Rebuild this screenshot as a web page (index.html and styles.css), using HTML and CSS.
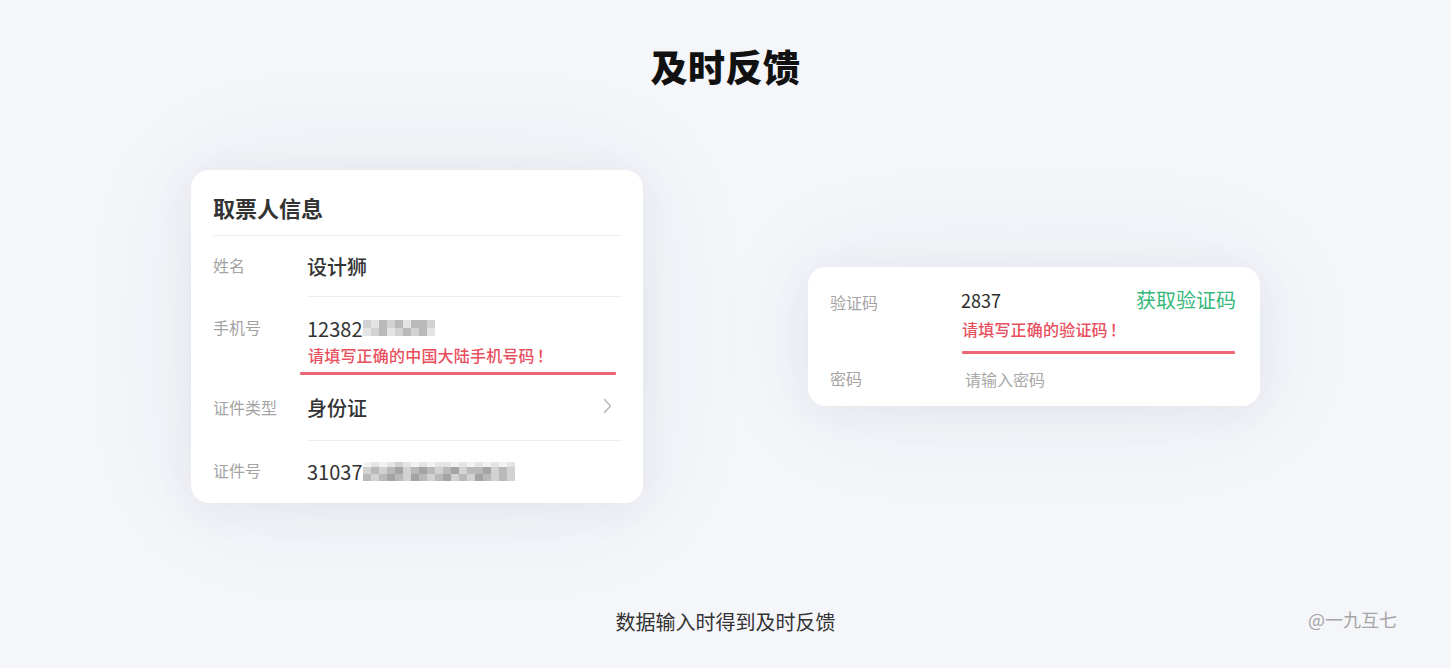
FILE: index.html
```html
<!DOCTYPE html>
<html lang="zh-CN">
<head>
<meta charset="utf-8">
<link rel="stylesheet" href="styles.css">
</head>
<body>
<div class="page">
  <h1 class="title">及时反馈</h1>
  <div class="cards">
    <div class="card card-left">
      <div class="card-title">取票人信息</div>
      <div class="row r1">
        <div class="label">姓名</div>
        <div class="content bordered"><span class="value">设计狮</span></div>
      </div>
      <div class="row r2">
        <div class="label">手机号</div>
        <div class="content">
          <div class="value num">12382<span class="blur b-short"><i class="c2"></i><i class="c1"></i><i class="c3"></i><i class="c2"></i><i class="c3"></i><i class="c1"></i><i class="c3"></i><i class="c3"></i><i class="c2"></i><i class="c1"></i><i class="c2"></i><i class="c3"></i><i class="c1"></i><i class="c2"></i><i class="c3"></i><i class="c2"></i><i class="c3"></i><i class="c1"></i></span></div>
          <div class="error">请填写正确的中国大陆手机号码<span class="bang">！</span></div>
          <div class="err-line wide"></div>
        </div>
      </div>
      <div class="row r3">
        <div class="label">证件类型</div>
        <div class="content bordered split">
          <span class="value">身份证</span>
          <svg class="chev" width="9" height="16" viewBox="0 0 9 16"><path d="M1.5 1.5 L7.5 8 L1.5 14.5" fill="none" stroke="#b5b5b5" stroke-width="1.4" stroke-linecap="round" stroke-linejoin="round"/></svg>
        </div>
      </div>
      <div class="row r4">
        <div class="label">证件号</div>
        <div class="content">
          <div class="value num">31037<span class="blur b-long"><i class="c0"></i><i class="c1"></i><i class="c0"></i><i class="c1"></i><i class="c2"></i><i class="c1"></i><i class="c0"></i><i class="c1"></i><i class="c0"></i><i class="c1"></i><i class="c1"></i><i class="c0"></i><i class="c1"></i><i class="c0"></i><i class="c1"></i><i class="c0"></i><i class="c1"></i><i class="c0"></i><i class="c1"></i><i class="c2"></i><i class="c3"></i><i class="c2"></i><i class="c3"></i><i class="c4"></i><i class="c2"></i><i class="c3"></i><i class="c4"></i><i class="c3"></i><i class="c2"></i><i class="c3"></i><i class="c4"></i><i class="c2"></i><i class="c3"></i><i class="c3"></i><i class="c4"></i><i class="c2"></i><i class="c3"></i><i class="c2"></i><i class="c3"></i><i class="c2"></i><i class="c3"></i><i class="c4"></i><i class="c3"></i><i class="c2"></i><i class="c4"></i><i class="c3"></i><i class="c2"></i><i class="c3"></i><i class="c4"></i><i class="c2"></i><i class="c3"></i><i class="c2"></i><i class="c4"></i><i class="c3"></i><i class="c2"></i><i class="c3"></i><i class="c2"></i></span></div>
        </div>
      </div>
    </div>

    <div class="card card-right">
      <div class="vrow v1">
        <div class="vlabel">验证码</div>
        <div class="vcontent">
          <div class="vtop">
            <span class="code">2837</span>
            <span class="get">获取验证码</span>
          </div>
          <div class="error">请填写正确的验证码<span class="bang">！</span></div>
          <div class="err-line"></div>
        </div>
      </div>
      <div class="vrow v2">
        <div class="vlabel">密码</div>
        <div class="vcontent"><span class="placeholder">请输入密码</span></div>
      </div>
    </div>
  </div>
  <div class="footer">
    <span></span>
    <span class="caption">数据输入时得到及时反馈</span>
    <span class="mark">@一九互七</span>
  </div>
</div>
</body>
</html>
```
FILE: styles.css
```css
* { box-sizing: border-box; }
html, body {
  margin: 0;
  padding: 0;
  background: #f5f6fa;
}
body {
  font-family: "Noto Sans CJK SC", "Noto Sans", sans-serif;
  color: #333;
}
.page {
  width: 1451px;
  height: 668px;
  overflow: hidden;
  padding-top: 46px;
}
.title {
  margin: 0;
  text-align: center;
  font-size: 37px;
  line-height: 40px;
  font-weight: 900;
  color: #111;
  letter-spacing: 0.5px;
}
.cards {
  margin-top: 84px;
  display: flex;
  align-items: center;
  justify-content: center;
  gap: 165px;
}
.card {
  width: 452px;
  background: #fff;
  border-radius: 18px;
  box-shadow: 0 6px 40px rgba(40, 50, 90, 0.06), 0 0 130px rgba(40, 50, 90, 0.06);
}
.card-left {
  height: 333px;
  padding: 0 21px 0 22px;
}
.card-title {
  font-size: 22px;
  line-height: 30px;
  font-weight: 700;
  color: #333;
  padding-top: 22px;
  padding-bottom: 13px;
  border-bottom: 1px solid #eeeeee;
}
.row {
  display: flex;
  align-items: flex-start;
}
.label {
  width: 94px;
  flex: none;
  font-size: 16px;
  line-height: 22px;
  color: #a3a3a3;
}
.content {
  flex: 1;
  min-width: 0;
}
.bordered { border-bottom: 1px solid #eeeeee; }
.split {
  display: flex;
  align-items: center;
  justify-content: space-between;
}
.value {
  font-size: 20px;
  line-height: 28px;
  font-weight: 500;
  color: #333;
  display: flex;
  align-items: center;
}
.num { font-weight: 400; }
.r1 .label { padding-top: 18px; }
.r1 .content { padding-top: 17px; padding-bottom: 15px; }
.r2 .label { padding-top: 19px; }
.r2 .content { padding-top: 18px; }
.r3 .label { padding-top: 21px; }
.r3 .content { padding-top: 19px; padding-bottom: 18px; }
.r4 .label { padding-top: 18px; }
.r4 .content { padding-top: 17px; }
.chev { margin-right: 10px; margin-top: -4px; }
.error {
  font-size: 16px;
  line-height: 22px;
  font-weight: 500;
  color: #e9505e;
  padding-left: 1px;
  letter-spacing: 0.2px;
}
.bang {
  display: inline-block;
  width: 16px;
  text-align: center;
  margin-left: 2px;
}
.r2 .error { margin-top: 1px; }
.err-line {
  height: 3px;
  background: #eb6672;
  border-radius: 1px;
  margin-top: 6px;
}
.err-line.wide { margin-left: -7px; margin-right: 6px; }
.blur {
  display: inline-grid;
}
.blur i { display: block; }
.b-short {
  grid-template-columns: repeat(9, 8px);
  grid-template-rows: repeat(2, 8px);
  margin-top: -3px;
}
.b-long {
  grid-template-columns: repeat(19, 8px);
  grid-template-rows: 5px 7px 7px;
  margin-top: -2px;
}
.c0 { background: #f2f2f2; }
.c1 { background: #e4e4e4; }
.c2 { background: #d2d2d2; }
.c3 { background: #b9b9b9; }
.c4 { background: #a4a4a4; }

.card-right {
  height: 139px;
  padding: 0 24px 0 22px;
}
.vrow { display: flex; align-items: flex-start; }
.vlabel {
  width: 131px;
  flex: none;
  font-size: 16px;
  line-height: 22px;
  color: #a3a3a3;
}
.vcontent { flex: 1; }
.v1 .vlabel { padding-top: 24px; }
.v1 .vcontent { padding-top: 19px; }
.vtop {
  display: flex;
  justify-content: space-between;
  align-items: center;
  height: 28px;
}
.code {
  font-size: 18px;
  line-height: 24px;
  color: #2b2b2b;
}
.get {
  font-size: 20px;
  line-height: 28px;
  color: #36b87a;
}
.v1 .error { margin-top: 4px; }
.v1 .err-line { margin-top: 11px; margin-left: 1px; margin-right: 1px; }
.v2 .vlabel { padding-top: 13px; }
.v2 .vcontent { padding-top: 13px; padding-left: 4px; }
.placeholder {
  font-size: 16px;
  line-height: 22px;
  color: #a8a8a8;
}

.footer {
  margin-top: 105px;
  display: grid;
  grid-template-columns: 1fr auto 1fr;
  align-items: center;
}
.caption {
  font-size: 20px;
  line-height: 28px;
  color: #333;
}
.mark {
  justify-self: end;
  padding-right: 54px;
  font-size: 18px;
  line-height: 24px;
  color: #a5a5a5;
  margin-top: -7px;
}
```
